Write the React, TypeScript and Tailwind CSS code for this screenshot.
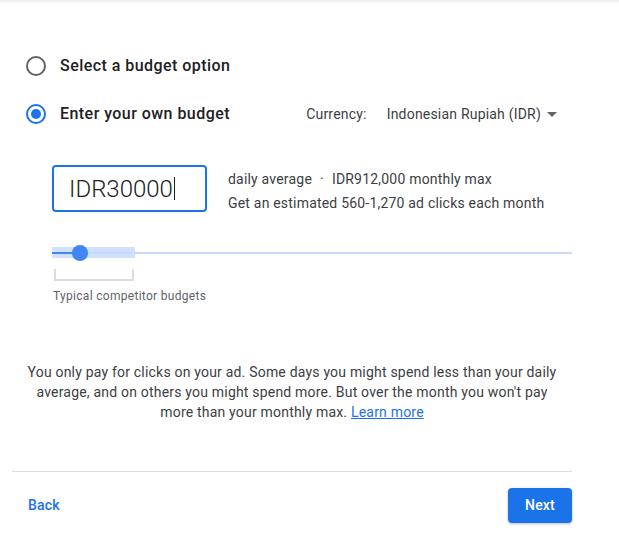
import React from "react";

function Radio({ checked }: { checked?: boolean }) {
  return (
    <span
      className={`flex h-[20px] w-[20px] items-center justify-center rounded-full border-2 ${
        checked ? "border-[#1a73e8]" : "border-[#5f6368]"
      }`}
    >
      {checked && <span className="h-[10px] w-[10px] rounded-full bg-[#1a73e8]" />}
    </span>
  );
}

export default function App() {
  return (
    <div className="h-[541px] w-[619px] overflow-hidden bg-white font-['Roboto',sans-serif] tracking-[0.2px] text-[#3c4043]">
      <div className="h-[4px] bg-gradient-to-b from-[#ececec] to-white" />
      <div className="ml-[12px] w-[560px] pt-[38px]">
        {/* budget options */}
        <div className="flex h-[48px] items-center pl-[14px]">
          <Radio />
          <span className="ml-[14px] text-[16px] font-medium tracking-[0.45px] text-[#202124]">
            Select a budget option
          </span>
        </div>
        <div className="flex h-[48px] items-center pl-[14px]">
          <Radio checked />
          <span className="ml-[14px] text-[16px] font-medium tracking-[0.45px] text-[#202124]">
            Enter your own budget
          </span>
          <div className="ml-auto mr-[15px] flex items-center text-[14px]">
            <span>Currency:</span>
            <span className="ml-[20px]">Indonesian Rupiah (IDR)</span>
            <svg width="10" height="5" viewBox="0 0 10 5" className="ml-[6px]">
              <path d="M0 0 L10 0 L5 5 Z" fill="#5f6368" />
            </svg>
          </div>
        </div>

        {/* amount */}
        <div className="mt-[27px] flex items-start pl-[40px]">
          <div className="flex h-[47px] w-[155px] items-center rounded-[4px] border-2 border-[#1a73e8] pl-[15px]">
            <span className="text-[24px] font-light leading-none tracking-normal text-[#202124]">IDR30000</span>
            <span className="ml-[1px] h-[23px] w-[1px] bg-[#202124]" />
          </div>
          <div className="ml-[21px] mt-[2px] text-[14px] leading-[24px]">
            <div>
              daily average<span className="mx-[8px]">·</span>IDR912,000 monthly max
            </div>
            <div>Get an estimated 560-1,270 ad clicks each month</div>
          </div>
        </div>

        {/* slider */}
        <div className="mt-[32px] pl-[40px]">
          <div className="relative h-[12px]">
            <div className="absolute left-0 right-0 top-[5px] h-[2px] bg-[#c6dafc]" />
            <div className="absolute left-0 top-0 h-[11px] w-[83px] bg-[#c6dafc]/80" />
            <div className="absolute left-0 top-[5px] h-[2px] w-[28px] bg-[#4285f4]" />
            <div className="absolute left-[20px] top-[-2px] h-[16px] w-[16px] rounded-full bg-[#4285f4]" />
          </div>
          <div className="ml-[2px] mt-[10px] h-[12px] w-[80px] border-2 border-t-0 border-[#dadce0]" />
          <div className="mt-[7px] pl-[1px] text-[12px] leading-[16px] tracking-[0.3px] text-[#5f6368]">
            Typical competitor budgets
          </div>
        </div>

        {/* info */}
        <p className="mt-[58px] text-center text-[14px] leading-[20px]">
          You only pay for clicks on your ad. Some days you might spend less than your daily
          <br />
          average, and on others you might spend more. But over the month you won't pay
          <br />
          more than your monthly max.{" "}
          <a href="#" className="text-[#1a73e8] underline">
            Learn more
          </a>
        </p>

        {/* footer */}
        <div className="mt-[49px] border-t border-[#dadce0]">
          <div className="flex items-center justify-between pt-[16px]">
            <button className="ml-[16px] text-[14px] font-medium text-[#1a73e8]">Back</button>
            <button className="h-[35px] w-[64px] rounded-[4px] bg-[#1a73e8] text-[14px] font-medium text-white shadow-[0_1px_3px_rgba(60,64,67,0.35)]">
              Next
            </button>
          </div>
        </div>
      </div>
    </div>
  );
}
